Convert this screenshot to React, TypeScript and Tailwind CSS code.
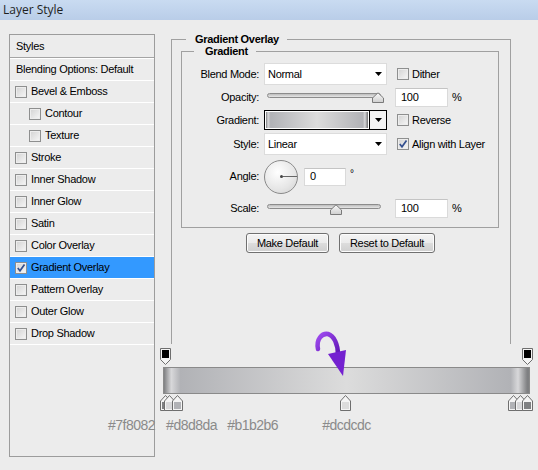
import React from "react";

const Check = ({ checked = false }: { checked?: boolean }) => (
  <span className="w-[12px] h-[12px] shrink-0 border border-[#8e8f8f] bg-[linear-gradient(135deg,#d2d2d2,#f7f7f7)] shadow-[inset_0_0_0_1px_#ededed] flex items-center justify-center">
    {checked && (
      <svg width="10" height="10" viewBox="0 0 10 10">
        <path d="M1.8 5 L4 7.8 L8.5 1.6" fill="none" stroke="#34508f" strokeWidth="1.7" />
      </svg>
    )}
  </span>
);

const Arrow = () => (
  <svg width="7" height="4" viewBox="0 0 7 4">
    <path d="M0 0H7L3.5 4Z" fill="#000" />
  </svg>
);

const Select = ({ value }: { value: string }) => (
  <div className="w-[123px] h-[22px] bg-white border border-[#dcdcdc] flex items-center justify-between pl-[3px] pr-[4px]">
    <span>{value}</span>
    <Arrow />
  </div>
);

const Input = ({ value, cls }: { value: string; cls: string }) => (
  <div className={cls + " bg-white border border-[#dadada] border-t-[#c4c4c4] flex items-center pl-[5px]"}>{value}</div>
);

const Thumb = () => (
  <svg width="12" height="11" viewBox="0 0 12 11">
    <defs>
      <linearGradient id="tg" x1="0" y1="0" x2="0" y2="1">
        <stop offset="0" stopColor="#fafafa" />
        <stop offset="1" stopColor="#cfcfcf" />
      </linearGradient>
    </defs>
    <path d="M0.5 10.5 V6 L6 0.8 L11.5 6 V10.5 Z" fill="url(#tg)" stroke="#7a7a7a" strokeLinejoin="round" />
  </svg>
);

const Slider = ({ thumbCls, trackCls }: { thumbCls: string; trackCls: string }) => (
  <div className="w-[123px] h-full relative">
    <div className={trackCls + " ml-[3px] mr-[6px] h-[5px] rounded-full border border-[#8c8c8c] bg-[linear-gradient(#bdbdbd,#e6e6e6)]"} />
    <div className={thumbCls + " absolute"}>
      <Thumb />
    </div>
  </div>
);

const Label = ({ children }: { children: React.ReactNode }) => (
  <div className="w-[77px] text-right pr-0 mr-[5px] shrink-0">{children}</div>
);

const TopMarker = () => (
  <svg width="11" height="17" viewBox="0 0 11 17">
    <path d="M0.5 0.5 H10.5 V11.5 L5.5 16.5 L0.5 11.5 Z" fill="#f4f4f4" stroke="#6e6e6e" />
    <rect x="2" y="2" width="7" height="8" fill="#000" />
  </svg>
);

const Stop = ({ color }: { color: string }) => (
  <svg width="11" height="16" viewBox="0 0 11 16">
    <path d="M0.5 15.5 V6 L5.5 0.5 L10.5 6 V15.5 Z" fill="#f4f4f4" stroke="#6e6e6e" />
    <rect x="2" y="7" width="7" height="7" fill={color} />
  </svg>
);

const rows: { label: string; indent?: boolean; checked?: boolean; selected?: boolean }[] = [
  { label: "Bevel & Emboss" },
  { label: "Contour", indent: true },
  { label: "Texture", indent: true },
  { label: "Stroke" },
  { label: "Inner Shadow" },
  { label: "Inner Glow" },
  { label: "Satin" },
  { label: "Color Overlay" },
  { label: "Gradient Overlay", checked: true, selected: true },
  { label: "Pattern Overlay" },
  { label: "Outer Glow" },
  { label: "Drop Shadow" },
];

const grad =
  "bg-[linear-gradient(90deg,#7f8082_0%,#d8d8da_2%,#b1b2b6_4.5%,#dcdcdc_50%,#b1b2b6_95%,#d8d8da_97%,#7f8082_99.5%)]";

export default function App() {
  return (
    <div className="w-[538px] h-[470px] bg-[#ececec] overflow-hidden text-[11px] tracking-[-0.3px] text-black font-['Liberation_Sans',Arial,sans-serif] leading-none">
      <div className="h-[20px] bg-[linear-gradient(#c9dbf1,#b9cde8)] pl-[3px] flex items-center text-[12px] tracking-normal font-['Open_Sans',sans-serif] text-[#1e1e1e]">
        Layer Style
      </div>
      <div className="flex">
        {/* left styles list */}
        <div className="ml-[9px] mt-[14px] w-[146px] h-[423px] border border-[#9c9c9c] flex flex-col shrink-0">
          <div className="h-[23px] shrink-0 flex items-center pl-[6px] border-b border-[#a4a4a4]">Styles</div>
          <div className="h-px shrink-0 bg-white" />
          <div className="h-[22px] shrink-0 flex items-center pl-[6px] border-b border-white">Blending Options: Default</div>
          {rows.map((r) => (
            <div
              key={r.label}
              className={
                "h-[22px] shrink-0 flex items-center gap-[4px] border-b border-white " +
                (r.indent ? "pl-[19px] " : "pl-[5px] ") +
                (r.selected ? "bg-[#3399ff]" : "")
              }
            >
              <Check checked={r.checked} />
              <span>{r.label}</span>
            </div>
          ))}
        </div>

        {/* right column */}
        <div className="ml-[5px] w-[373px] flex flex-col shrink-0">
          <div className="ml-[11px] mt-[19px] w-[340px] h-[305px] border border-b-0 border-[#a0a0a0] flex flex-col">
            <div className="-mt-[8px] ml-[14px] pl-[9px] pr-[8px] w-fit bg-[#ececec] font-bold h-[14px] leading-[14px]">
              Gradient Overlay
            </div>
            <div className="ml-[9px] mt-[5px] w-[318px] h-[177px] border border-[#a0a0a0] flex flex-col">
              <div className="-mt-[8px] ml-[12px] pl-[11px] pr-[8px] w-fit bg-[#ececec] font-bold h-[14px] leading-[14px]">
                Gradient
              </div>
              {/* Blend mode */}
              <div className="mt-[5px] h-[22px] flex items-center">
                <Label>Blend Mode:</Label>
                <Select value="Normal" />
                <div className="ml-[10px] flex items-center gap-[3px]">
                  <Check />
                  <span>Dither</span>
                </div>
              </div>
              {/* Opacity */}
              <div className="h-[24px] flex items-center">
                <Label>Opacity:</Label>
                <Slider trackCls="mt-[8px]" thumbCls="left-[108px] top-[7px]" />
                <Input value="100" cls="ml-[8px] w-[53px] h-[19px]" />
                <span className="ml-[4px]">%</span>
              </div>
              {/* Gradient */}
              <div className="h-[22px] flex items-center">
                <Label>Gradient:</Label>
                <div className="w-[123px] h-[20px] border border-black flex">
                  <div className="flex-1 border border-white">
                    <div className={"w-full h-full " + grad} />
                  </div>
                  <div className="w-[17px] border-l border-black bg-[#f4f4f4] flex items-center justify-center">
                    <Arrow />
                  </div>
                </div>
                <div className="ml-[10px] flex items-center gap-[3px]">
                  <Check />
                  <span>Reverse</span>
                </div>
              </div>
              {/* Style */}
              <div className="mt-[2px] h-[22px] flex items-center">
                <Label>Style:</Label>
                <Select value="Linear" />
                <div className="ml-[10px] flex items-center gap-[3px]">
                  <Check checked />
                  <span>Align with Layer</span>
                </div>
              </div>
              {/* Angle */}
              <div className="mt-[5px] h-[33px] flex items-center">
                <Label>Angle:</Label>
                <div className="w-[34px] h-[34px] rounded-full border border-[#8a8a8a] bg-[radial-gradient(circle_at_40%_35%,#ffffff,#e6e6e6_60%,#cfcfcf)] relative flex items-center">
                  <div className="ml-[15px] w-[3px] h-[3px] rounded-full bg-[#444]" />
                  <div className="w-[14px] h-px bg-[#666]" />
                </div>
                <Input value="0" cls="ml-[6px] w-[42px] h-[18px]" />
                <span className="ml-[4px] self-start mt-[9px] text-[10px]">°</span>
              </div>
              {/* Scale */}
              <div className="mt-[5px] h-[20px] flex items-center">
                <Label>Scale:</Label>
                <Slider trackCls="mt-[6px]" thumbCls="left-[66px] top-[6px]" />
                <Input value="100" cls="ml-[8px] w-[53px] h-[19px]" />
                <span className="ml-[4px]">%</span>
              </div>
            </div>
            {/* buttons */}
            <div className="mt-[5px] ml-[74px] flex gap-[10px]">
              <div className="w-[83px] h-[20px] rounded-[3px] border border-[#707070] bg-[linear-gradient(#f4f4f4_0%,#ebebeb_50%,#dddddd_51%,#cfcfcf_100%)] shadow-[inset_0_0_0_1px_#fcfcfc] flex items-center justify-center">
                Make Default
              </div>
              <div className="w-[96px] h-[20px] rounded-[3px] border border-[#707070] bg-[linear-gradient(#f4f4f4_0%,#ebebeb_50%,#dddddd_51%,#cfcfcf_100%)] shadow-[inset_0_0_0_1px_#fcfcfc] flex items-center justify-center">
                Reset to Default
              </div>
            </div>
          </div>

          {/* gradient editor */}
          <div className="relative flex flex-col">
            <div className="mt-[4px] h-[17px] flex justify-between">
              <TopMarker />
              <TopMarker />
            </div>
            <div className={"mt-[2px] ml-[3px] w-[367px] h-[27px] border border-[#8a8a8a] " + grad} />
            <div className="mt-[1px] h-[16px] relative">
              <div className="absolute left-0 top-0"><Stop color="#7f8082" /></div>
              <div className="absolute left-[4px] top-0"><Stop color="#d8d8da" /></div>
              <div className="absolute left-[12px] top-0"><Stop color="#b1b2b6" /></div>
              <div className="absolute left-[180px] top-0"><Stop color="#dcdcdc" /></div>
              <div className="absolute left-[348px] top-0"><Stop color="#b1b2b6" /></div>
              <div className="absolute left-[355px] top-0"><Stop color="#d8d8da" /></div>
              <div className="absolute left-[362px] top-0"><Stop color="#7f8082" /></div>
            </div>
            <div className="mt-[6px] -ml-[52px] flex text-[14px] tracking-[-0.5px] text-[#8a8a8a] leading-[16px]">
              <span>#7f8082</span>
              <span className="ml-[11px]">#d8d8da</span>
              <span className="ml-[10px]">#b1b2b6</span>
              <span className="ml-[44px]">#dcdcdc</span>
            </div>
            <svg className="absolute left-[152px] -top-[14px]" width="40" height="50" viewBox="0 0 40 50">
              <defs>
                <linearGradient id="pg" x1="0" y1="0" x2="1" y2="1">
                  <stop offset="0" stopColor="#a04cf0" />
                  <stop offset="1" stopColor="#5e14b4" />
                </linearGradient>
              </defs>
              <path d="M6 19 C 4 9, 10 3, 16 4 C 22 6, 26 14, 26 25" fill="none" stroke="url(#pg)" strokeWidth="4.5" strokeLinecap="round" />
              <path d="M16 24 L34 20 L31 46 Z" fill="#7421d0" />
            </svg>
          </div>
        </div>
      </div>
    </div>
  );
}
